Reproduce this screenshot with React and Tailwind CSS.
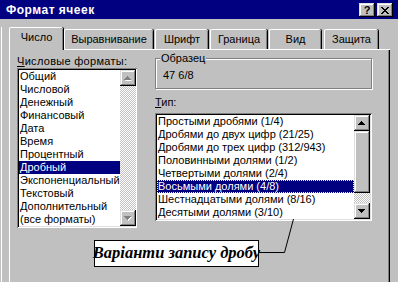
import React from 'react'

const formats = [
  'Общий',
  'Числовой',
  'Денежный',
  'Финансовый',
  'Дата',
  'Время',
  'Процентный',
  'Дробный',
  'Экспоненциальный',
  'Текстовый',
  'Дополнительный',
  '(все форматы)'
]

const types = [
  'Простыми дробями (1/4)',
  'Дробями до двух цифр (21/25)',
  'Дробями до трех цифр (312/943)',
  'Половинными долями (1/2)',
  'Четвертыми долями (2/4)',
  'Восьмыми долями (4/8)',
  'Шестнадцатыми долями (8/16)',
  'Десятыми долями (3/10)'
]

const tabs = [
  { label: 'Число', cls: 'w-[54px]', active: true },
  { label: 'Выравнивание', cls: 'w-[89px] ml-[1px]' },
  { label: 'Шрифт', cls: 'w-[53px] ml-[2px]' },
  { label: 'Граница', cls: 'w-[57px] ml-[2px]' },
  { label: 'Вид', cls: 'w-[52px] ml-[2px]' },
  { label: 'Защита', cls: 'w-[54px] ml-[3px]' }
]

const raised = 'bg-[#c0c0c0] shadow-[inset_-1px_-1px_#000,inset_1px_1px_#dfdfdf,inset_-2px_-2px_#808080,inset_2px_2px_#fff]'
const sunken = 'shadow-[inset_1px_1px_#808080,inset_-1px_-1px_#fff,inset_2px_2px_#000,inset_-2px_-2px_#dfdfdf]'
const dither = 'bg-[repeating-conic-gradient(#c0c0c0_0%_25%,#fff_0%_50%)] bg-[length:2px_2px]'

function Arrow({ down, disabled }) {
  const pts = down ? '0,0 7,0 3.5,4' : '3.5,0 7,4 0,4'
  return (
    <svg width="8" height="5" viewBox="0 0 8 5" className="block">
      {disabled && <polygon points={pts} fill="#fff" transform="translate(1,1)" />}
      <polygon points={pts} fill={disabled ? '#808080' : '#000'} shapeRendering="crispEdges" />
    </svg>
  )
}

function ScrollBtn({ down, disabled }) {
  return (
    <div className={`w-[16px] h-[16px] flex items-center justify-center ${raised}`}>
      <Arrow down={down} disabled={disabled} />
    </div>
  )
}

export default function App() {
  return (
    <div className="w-[398px] h-[282px] overflow-hidden relative bg-[#c0c0c0] font-['Liberation_Sans',Arial,sans-serif] text-[11px] text-black">
      {/* title bar */}
      <div className="h-[19px] bg-[#000080] flex items-center justify-between pl-[6px] pr-[5px]">
        <span className="text-white font-bold text-[12px] tracking-[0.5px] leading-none">Формат ячеек</span>
        <div className="flex gap-[2px] mt-[1px]">
          <div className={`w-[16px] h-[14px] flex items-center justify-center ${raised}`}>
            <span className="font-bold text-[11px] leading-none">?</span>
          </div>
          <div className={`w-[16px] h-[14px] flex items-center justify-center ${raised}`}>
            <svg width="8" height="7" viewBox="0 0 8 7" className="block">
              <path d="M0 0 L7 7 M1 0 L8 7 M7 0 L0 7 M8 0 L1 7" stroke="#000" strokeWidth="1" />
            </svg>
          </div>
        </div>
      </div>

      <div className="border-l border-white ml-[1px] h-[263px]">
        {/* tabs */}
        <div className="relative z-10 flex items-end h-[22px] mt-[8px] ml-[7px]">
          {tabs.map((t) => (
            <div
              key={t.label}
              className={`${t.cls} ${t.active ? 'h-[23px] -mb-[1px] pb-[3px]' : 'h-[20px]'} flex items-center justify-center bg-[#c0c0c0] border-l border-t border-white rounded-tl-[2px] rounded-tr-[2px] shadow-[inset_-1px_0_#808080,1px_0_#000]`}
            >
              {t.label}
            </div>
          ))}
        </div>

        {/* tab panel */}
        <div className="ml-[7px] w-[381px] h-[240px] border-l border-t border-white shadow-[inset_-1px_0_#000,inset_-2px_0_#808080] flex pl-[7px] pt-[4px]">
          {/* left column */}
          <div className="w-[120px] flex flex-col">
            <div className="h-[14px] leading-[14px] tracking-[0.3px]">
              <span className="underline">Ч</span>исловые форматы:
            </div>
            <div className={`h-[160px] bg-white p-[2px] flex ${sunken}`}>
              <div className="flex-1 flex flex-col">
                {formats.map((f) => (
                  <div
                    key={f}
                    className={`h-[13px] leading-[13px] pl-[1px] whitespace-nowrap ${f === 'Дробный' ? 'bg-[#000080] text-white' : ''}`}
                  >
                    {f}
                  </div>
                ))}
              </div>
              <div className={`w-[16px] flex flex-col justify-between ${dither}`}>
                <ScrollBtn disabled />
                <ScrollBtn down disabled />
              </div>
            </div>
          </div>

          {/* right column */}
          <div className="w-[217px] ml-[18px] flex flex-col">
            <div className="relative mt-[4px] h-[31px] border border-[#808080] shadow-[inset_1px_1px_#fff,1px_1px_#fff] pl-[7px] pt-[10px] leading-[13px]">
              <span className="absolute -top-[7px] left-[4px] px-[1px] bg-[#c0c0c0] leading-[13px]">Образец</span>
              47 6/8
            </div>
            <div className="h-[14px] leading-[14px] mt-[6px]">
              <span className="underline">Т</span>ип:
            </div>
            <div className={`mt-[4px] h-[108px] bg-white p-[2px] flex ${sunken}`}>
              <div className="flex-1 flex flex-col">
                {types.map((t) => (
                  <div
                    key={t}
                    className={`h-[13px] leading-[13px] pl-[1px] whitespace-nowrap ${t === 'Восьмыми долями (4/8)' ? 'bg-[#000080] text-white outline-1 outline-dotted outline-offset-[-1px] outline-[#ffff80]' : ''}`}
                  >
                    {t}
                  </div>
                ))}
              </div>
              <div className={`w-[16px] flex flex-col ${dither}`}>
                <ScrollBtn />
                <div className={`h-[62px] ${raised}`} />
                <div className="flex-1" />
                <ScrollBtn down />
              </div>
            </div>
          </div>
        </div>
      </div>

      {/* callout */}
      <svg className="absolute left-0 top-0 pointer-events-none" width="398" height="282">
        <path d="M258 252.5 H284.5 L293.5 219" stroke="#000" strokeWidth="1" fill="none" />
      </svg>
      <div className="absolute left-[94px] top-[240px] w-[165px] h-[27px] bg-white border border-black flex items-center justify-center whitespace-nowrap font-['Liberation_Serif','Times_New_Roman',serif] font-bold italic text-[16.5px] leading-none">
        Варіанти запису дробу
      </div>
    </div>
  )
}
